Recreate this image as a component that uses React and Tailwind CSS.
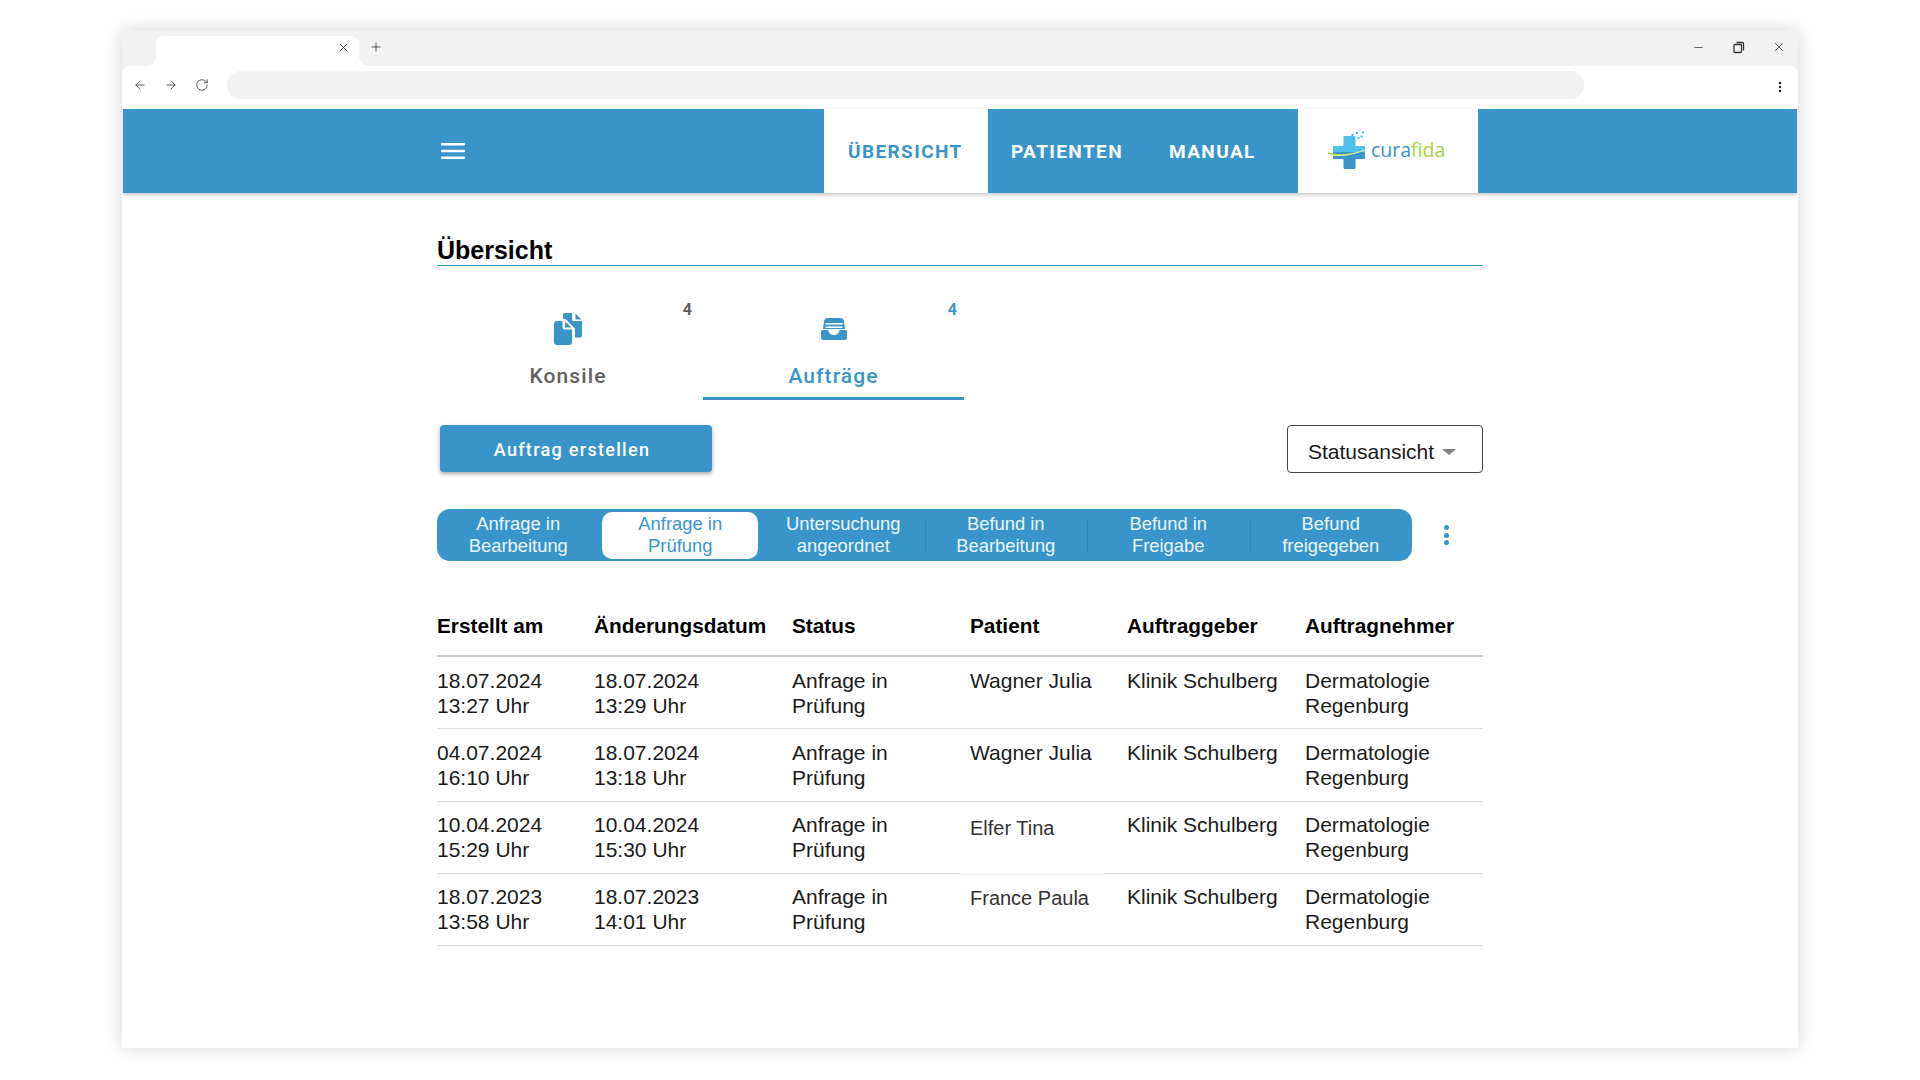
import React from 'react';
import { ArrowLeft, ArrowRight, RotateCw, X, Plus, Minus, EllipsisVertical } from 'lucide-react';

const rows = [
  { created: ['18.07.2024', '13:27 Uhr'], changed: ['18.07.2024', '13:29 Uhr'], patient: 'Wagner Julia' },
  { created: ['04.07.2024', '16:10 Uhr'], changed: ['18.07.2024', '13:18 Uhr'], patient: 'Wagner Julia' },
  { created: ['10.04.2024', '15:29 Uhr'], changed: ['10.04.2024', '15:30 Uhr'], patient: 'Elfer Tina', nudge: 'relative top-[3px] text-[20px] text-[#333]', patch: true },
  { created: ['18.07.2023', '13:58 Uhr'], changed: ['18.07.2023', '14:01 Uhr'], patient: 'France Paula', nudge: 'relative top-[1px] text-[20px] text-[#333]' },
];

const steps = [
  ['Anfrage in', 'Bearbeitung'],
  ['Anfrage in', 'Prüfung'],
  ['Untersuchung', 'angeordnet'],
  ['Befund in', 'Bearbeitung'],
  ['Befund in', 'Freigabe'],
  ['Befund', 'freigegeben'],
];

const headers = ['Erstellt am', 'Änderungsdatum', 'Status', 'Patient', 'Auftraggeber', 'Auftragnehmer'];

const FilesIcon = () => (
  <svg width="28" height="32" viewBox="0 0 28 32" fill="#3995c9">
    <path d="M9 1.5A1.5 1.5 0 0 1 10.5 0H18v6.5A1.5 1.5 0 0 0 19.5 8H28v14.5a2 2 0 0 1-2 2h-5V15.5L11.5 6H9Z" />
    <path d="M21.5 0.5 27.5 6.5H21.5Z" />
    <path d="M0 11a3 3 0 0 1 3-3h5.5v6.5a2 2 0 0 0 2 2H18V29a3 3 0 0 1-3 3H3a3 3 0 0 1-3-3Z" />
    <path d="M11 8.5 17.5 14.5H11Z" />
  </svg>
);

const DrawerIcon = () => (
  <svg width="26" height="22" viewBox="0 0 26 22" fill="#3995c9">
    <path d="M2 11 3.2 2.5A3 3 0 0 1 6 0h14a3 3 0 0 1 2.8 2.5L24 11Z" />
    <rect x="4.5" y="5" width="17" height="1.6" fill="#fff" />
    <rect x="4.5" y="8.4" width="17" height="1.6" fill="#fff" />
    <path d="M0 14a2 2 0 0 1 2-2h5.5v.5a5.5 4.5 0 0 0 11 0V12H24a2 2 0 0 1 2 2v6a2 2 0 0 1-2 2H2a2 2 0 0 1-2-2Z" />
    <path d="M9.5 12h7a3.5 3 0 0 1-7 0Z" fill="#fff" />
  </svg>
);

const MenuIcon = () => (
  <svg width="24" height="16" viewBox="0 0 24 16" fill="#fff">
    <rect y="0" width="24" height="2.6" rx="0.8" />
    <rect y="6.7" width="24" height="2.6" rx="0.8" />
    <rect y="13.4" width="24" height="2.6" rx="0.8" />
  </svg>
);

const TabFlare = ({ flip }) => (
  <svg width="9" height="9" viewBox="0 0 9 9" className={flip ? 'absolute bottom-0 right-[-9px]' : 'absolute bottom-0 left-[-9px] -scale-x-100'}>
    <path d="M0 0V9H9A9 9 0 0 1 0 0Z" fill="#fff" />
  </svg>
);

const Logo = () => (
  <div className="flex items-center ml-[30px] mt-[-2px]">
    <svg width="46" height="38" viewBox="0 0 46 38" className="shrink-0">
      <rect x="15.5" y="5" width="12" height="16" rx="1" fill="#4fc0ec" />
      <rect x="5" y="15" width="32" height="8" rx="1" fill="#4fc0ec" />
      <rect x="15.5" y="21" width="12" height="17" rx="1.5" fill="#3a95c9" />
      <rect x="5" y="21" width="32" height="7" rx="1" fill="#3a95c9" />
      <path d="M0 23C6 27 24 26 43 16 28 23 10 25 0.5 21Z" fill="#a6d63a" />
      <path d="M1 23.5C10 26 26 24 39 18" fill="none" stroke="#fff" strokeWidth="0.7" />
      <g fill="#4fb4e0">
        <rect x="23.5" y="3" width="2" height="2" />
        <rect x="28" y="1" width="2" height="2" />
        <rect x="34" y="0.5" width="2" height="2" />
        <rect x="25" y="7" width="2" height="2" />
        <rect x="29.5" y="6" width="2" height="2" />
        <rect x="32.5" y="4.5" width="2" height="2" />
        <rect x="23.5" y="10" width="2" height="2" />
      </g>
    </svg>
    <span className="ml-[-3px] mt-[-1px] font-['Open_Sans',sans-serif] text-[19.5px] leading-none">
      <span className="text-[#3a95c9]">cura</span>
      <span className="text-[#a6d63a]">fida</span>
    </span>
  </div>
);

export default function App() {
  return (
    <div className="h-screen overflow-hidden bg-white pt-[30px] font-['Liberation_Sans',sans-serif] text-[#1a1a1a]">
      <div className="mx-auto h-[1018px] w-[1676px] overflow-hidden rounded-t-md bg-white shadow-[0_0_18px_rgba(0,0,0,0.17)]">
        {/* Browser chrome */}
        <div className="bg-[#f2f2f2]">
          <div className="flex h-[36px] items-end pl-[34px]">
            <div className="relative flex h-[30px] w-[203px] items-center justify-end rounded-t-[8px] bg-white pb-[8px] pr-[9px]">
              <TabFlare />
              <TabFlare flip />
              <X size={13} strokeWidth={1.6} className="text-[#333]" />
            </div>
            <Plus size={14} strokeWidth={1.5} className="mb-[12px] ml-[10px] text-[#444]" />
            <div className="mb-[12px] ml-auto flex items-center gap-[27px] pr-[12px] text-[#333]">
              <Minus size={13} strokeWidth={1.4} />
              <svg width="13" height="13" viewBox="0 0 13 13" fill="none" stroke="#333" strokeWidth="1.3">
                <rect x="2" y="3.5" width="7.5" height="8" rx="1" />
                <path d="M4.5 1.5h6a1 1 0 0 1 1 1v7" />
              </svg>
              <X size={14} strokeWidth={1.4} />
            </div>
          </div>
          <div className="flex h-[43px] items-center rounded-t-[8px] bg-white pb-[6px] pl-[11px] pr-[11px]">
            <div className="flex items-center gap-[17px] text-[#444]">
              <ArrowLeft size={14} strokeWidth={1.5} />
              <ArrowRight size={14} strokeWidth={1.5} />
              <RotateCw size={14} strokeWidth={1.5} />
            </div>
            <div className="ml-[18px] h-[28px] w-[1357px] rounded-full bg-[#f2f2f2]"></div>
            <EllipsisVertical size={14} strokeWidth={2.2} className="ml-auto mt-[5px] text-[#222]" />
          </div>
        </div>

        {/* App header */}
        <div className="mx-px flex h-[84px] items-stretch bg-[#3995c9] pl-[318px] shadow-[0_2px_4px_rgba(0,0,0,0.22)]">
          <div className="flex w-[383px] items-center">
            <MenuIcon />
          </div>
          <nav className="flex font-['Roboto',sans-serif] text-[19px] font-bold tracking-[1.4px] text-white">
            <div className="flex w-[164px] items-center bg-white pl-[24px] pt-[2px] text-[#3995c9]">ÜBERSICHT</div>
            <div className="flex w-[156px] items-center pl-[23px] pt-[2px]">PATIENTEN</div>
            <div className="flex w-[154px] items-center pl-[25px] pt-[2px]">MANUAL</div>
          </nav>
          <div className="flex w-[180px] items-center bg-white">
            <Logo />
          </div>
        </div>

        {/* Content */}
        <main className="mx-auto w-[1046px]">
          <h1 className="mt-[42px] h-[31px] border-b border-[#3995c9] text-[25px] font-bold leading-[31px] text-black">Übersicht</h1>

          <div className="flex gap-[4px] font-['Roboto',sans-serif]">
            <div className="relative flex h-[134px] w-[262px] flex-col items-center pt-[47px]">
              <span className="absolute right-[7px] top-[32px] text-[16px] font-bold text-[#5f5f5f]">4</span>
              <div className="flex h-[32px] items-center"><FilesIcon /></div>
              <span className="mt-[19px] text-[21px] font-medium leading-[24px] tracking-[1.1px] text-[#616161]">Konsile</span>
            </div>
            <div className="relative flex h-[134px] w-[261px] flex-col items-center border-b-[3px] border-[#3995c9] pt-[47px]">
              <span className="absolute right-[7px] top-[32px] text-[16px] font-bold text-[#3995c9]">4</span>
              <div className="flex h-[32px] items-center"><DrawerIcon /></div>
              <span className="mt-[19px] text-[21px] font-medium leading-[24px] tracking-[1.1px] text-[#3995c9]">Aufträge</span>
            </div>
          </div>

          <div className="mt-[25px] flex items-stretch justify-between pl-[3px]">
            <button className="h-[47px] w-[272px] rounded-[4px] bg-[#3995c9] pr-[8px] pt-[2px] font-['Roboto',sans-serif] text-[18px] font-medium tracking-[1.3px] text-white shadow-[0_2px_4px_rgba(0,0,0,0.35)]">
              Auftrag erstellen
            </button>
            <button className="flex h-[48px] w-[196px] items-center rounded-[4px] border border-[#444] pl-[20px] pt-[5px] text-[21px] text-[#1a1a1a]">
              Statusansicht
              <span className="ml-[8px] h-0 w-0 border-x-[7px] border-t-[6px] border-x-transparent border-t-[#808080]"></span>
            </button>
          </div>

          <div className="mt-[36px] flex items-center">
            <div className="flex h-[52px] w-[975px] items-center rounded-[13px] bg-[#3995c9] text-[18.4px] leading-[22px] text-[#eaf4fa]">
              {steps.map((step, i) => (
                <div key={i} className="relative flex h-full flex-1 items-center justify-center text-center">
                  {i > 2 && <span className="absolute bottom-[8px] left-0 top-[9px] w-px bg-[#3388b8]"></span>}
                  {i === 1 ? (
                    <div className="ml-[-1px] flex h-[47px] w-[156px] flex-col items-center justify-center rounded-[10px] bg-white text-[#3995c9]">
                      <span>{step[0]}</span>
                      <span>{step[1]}</span>
                    </div>
                  ) : (
                    <div className="flex flex-col items-center">
                      <span>{step[0]}</span>
                      <span>{step[1]}</span>
                    </div>
                  )}
                </div>
              ))}
            </div>
            <div className="ml-[32px] flex flex-col gap-[2.5px]">
              <span className="h-[5px] w-[5px] rounded-full bg-[#3995c9]"></span>
              <span className="h-[5px] w-[5px] rounded-full bg-[#3995c9]"></span>
              <span className="h-[5px] w-[5px] rounded-full bg-[#3995c9]"></span>
            </div>
          </div>

          <div className="mt-[52px] grid grid-cols-[157px_198px_178px_157px_178px_178px] border-b-2 border-[#cfcfcf] pb-[17px] text-[20.8px] font-bold leading-[25px] text-black">
            {headers.map((h) => (
              <div key={h}>{h}</div>
            ))}
          </div>

          <div className="text-[21px] leading-[25px]">
            {rows.map((row, i) => (
              <div key={i} className="grid h-[72.3px] grid-cols-[157px_198px_178px_157px_178px_178px] border-b border-[#dcdcdc] pt-[10.5px]">
                <div>{row.created[0]}<br />{row.created[1]}</div>
                <div>{row.changed[0]}<br />{row.changed[1]}</div>
                <div>Anfrage in<br />Prüfung</div>
                <div className="relative">
                  <span className={row.nudge}>{row.patient}</span>
                  {row.patch && (
                    <span className="absolute left-[-10px] top-[61px] h-[2px] w-[144px] border-b border-[#f0f0f0] bg-white"></span>
                  )}
                </div>
                <div>Klinik Schulberg</div>
                <div>Dermatologie<br />Regenburg</div>
              </div>
            ))}
          </div>
        </main>
      </div>
    </div>
  );
}
